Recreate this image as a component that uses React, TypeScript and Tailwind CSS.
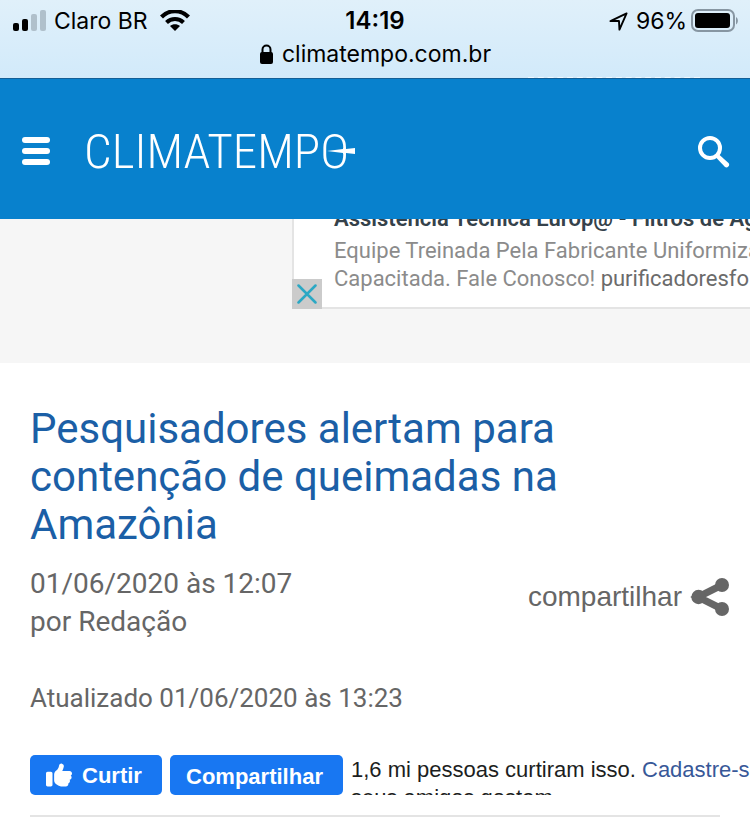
import { FaThumbsUp } from 'react-icons/fa6';

function StatusBar() {
  return (
    <div className="relative h-[79px] overflow-hidden border-b border-[#145f96] bg-gradient-to-b from-[#e0f0fa] to-[#d2eafa] font-['Inter',sans-serif] text-black">
      <div className="grid h-[42px] grid-cols-3 items-center px-3 text-[23px] leading-7">
        <div className="flex items-center gap-2">
          <svg width="34" height="22" viewBox="0 0 34 22" aria-hidden="true">
            <rect x="1" y="13" width="6" height="8" rx="2" />
            <rect x="10" y="9" width="6" height="12" rx="2" />
            <rect x="19" y="4" width="6" height="17" rx="2" fill="#b0c0cb" />
            <rect x="28" y="0" width="6" height="21" rx="2" fill="#b0c0cb" />
          </svg>
          <span className="whitespace-nowrap">Claro BR</span>
          <svg className="ml-1" width="30" height="22" viewBox="0 0 30 22" aria-hidden="true">
            <path d="M1.500 7C9 -.7 21 -.7 28.500 7" fill="none" stroke="#000" strokeWidth="4.200" />
            <path d="M6.500 12.500c4.700-4.700 12.300-4.700 17 0" fill="none" stroke="#000" strokeWidth="4" />
            <path d="M15 21l-5-5c2.800-2.500 7.200-2.500 10 0z" />
          </svg>
        </div>
        <span className="text-center text-[24px] font-semibold">14:19</span>
        <div className="flex items-center justify-end gap-1">
          <svg className="mr-1" width="19" height="19" viewBox="0 0 20 20" fill="none" stroke="#000" strokeWidth="2" strokeLinejoin="round" aria-hidden="true">
            <path d="M18.500 1.500L1.500 9.500h9l0.500 9z" />
          </svg>
          <span>96%</span>
          <svg width="47" height="24" viewBox="0 0 47 24" aria-hidden="true">
            <rect x="1" y="1" width="42" height="21" rx="6" fill="none" stroke="#8796a2" strokeWidth="2" />
            <rect x="4" y="4" width="35" height="15" rx="3" />
            <path d="M45 8c2.500 1.500 2.500 6 0 7.500z" fill="#8796a2" />
          </svg>
        </div>
      </div>
      <div className="flex items-center justify-center gap-2 text-[23px] leading-6">
        <svg width="15" height="20" viewBox="0 0 15 20" aria-hidden="true">
          <path d="M3.500 9V5.500a4 4 0 0 1 8 0V9" fill="none" stroke="#000" strokeWidth="2" />
          <rect x="1" y="8" width="13" height="12" rx="2" />
        </svg>
        <span>climatempo.com.br</span>
      </div>
      {/* page content scrolled behind the bar */}
      <div className="absolute right-[50px] -bottom-px w-[172px] border-b-2 border-dashed border-white/70" />
    </div>
  );
}

function Header() {
  return (
    <header className="flex h-[140px] items-center justify-between bg-[#0881cd] px-5 pt-1 text-white">
      <div className="flex items-center gap-8">
        <button type="button" aria-label="Menu" className="flex w-8 flex-col gap-[5px] px-[2px]">
          <span className="h-1.5 rounded-full bg-white" />
          <span className="h-1.5 rounded-full bg-white" />
          <span className="h-1.5 rounded-full bg-white" />
        </button>
        <a href="#" className="flex items-center font-['Roboto_Condensed',sans-serif] text-[49px] leading-none font-light">
          CLIMATEMPO
          <svg className="-ml-[22px]" width="28" height="8" viewBox="0 0 28 8" fill="#fff" aria-hidden="true">
            <path d="M0 4l16-2V1l3 1 9-1v6l-9-1-3 1V6z" />
          </svg>
        </a>
      </div>
      <button type="button" aria-label="Buscar">
        <svg width="34" height="34" viewBox="0 0 34 34" aria-hidden="true">
          <circle cx="14" cy="14" r="10" fill="none" stroke="#fff" strokeWidth="4" />
          <path d="M20 23.500l3-3 9.500 8.500c2 2.500-1 5.500-3.500 4z" fill="#fff" />
        </svg>
      </button>
    </header>
  );
}

function AdBanner() {
  return (
    <section className="h-36 overflow-hidden bg-[#f6f6f6]">
      <div className="relative ml-[292px] flex h-[90px] flex-col justify-end border-b-2 border-l-2 border-[#e4e4e4] bg-white pb-3.5 pl-10 font-['Roboto',sans-serif] text-[22px] leading-7 whitespace-nowrap text-[#8b8b8b]">
        <p className="mb-1 font-semibold text-[#35424b]">Assistência Técnica Europ@ - Filtros de Água</p>
        <p>Equipe Treinada Pela Fabricante Uniformizada e</p>
        <p>
          Capacitada. Fale Conosco! <span className="text-[#6b6b6b]">purificadoresfo</span>
        </p>
        <button type="button" aria-label="Fechar" className="absolute -bottom-0.5 -left-0.5 flex size-[30px] items-center justify-center bg-[#cbcbcb]">
          <svg width="20" height="20" viewBox="0 0 20 20" stroke="#2ba8c4" strokeWidth="2.500" strokeLinecap="round" aria-hidden="true">
            <path d="M1.500 1.500l17 17M18.500 1.500l-17 17" />
          </svg>
        </button>
      </div>
    </section>
  );
}

function LikeBar() {
  return (
    <div className="-mr-[30px] flex h-10 gap-2 overflow-hidden font-['Liberation_Sans',Arial,sans-serif] text-[22px]">
      <button type="button" className="flex w-[132px] shrink-0 items-center justify-center gap-2.5 rounded-[5px] bg-[#1877f2] pr-1 font-bold text-white">
        <FaThumbsUp className="size-[26px]" />
        Curtir
      </button>
      <button type="button" className="w-[173px] shrink-0 rounded-[5px] bg-[#1877f2] pt-0.5 pr-1 font-bold text-white">
        Compartilhar
      </button>
      <p className="pt-px leading-7 whitespace-nowrap text-[#1c1e21]">
        1,6 mi pessoas curtiram isso.{' '}
        <a href="#" className="text-[#385898]">Cadastre-se</a>
        <br />
        seus amigos gostam.
      </p>
    </div>
  );
}

export default function App() {
  return (
    <div className="w-full overflow-hidden bg-white">
      <StatusBar />
      <Header />
      <AdBanner />
      <main className="px-[30px] pt-[42px] font-['Roboto',sans-serif] text-[28px] text-[#666]">
        <h1 className="max-w-[600px] text-[42px] leading-[48px] text-[#1b5fa6]">
          Pesquisadores alertam para contenção de queimadas na Amazônia
        </h1>
        <div className="-mr-[10px] mt-4 flex items-start justify-between leading-[38px]">
          <p>
            01/06/2020 às 12:07
            <br />
            por Redação
          </p>
          <a href="#" className="mt-3 flex items-center gap-2 font-['Liberation_Sans',Arial,sans-serif]">
            compartilhar
            <svg width="40" height="40" viewBox="0 0 40 40" fill="#666" aria-hidden="true">
              <path d="M32 8L8 20l24 12" fill="none" stroke="#666" strokeWidth="7" />
              <circle cx="8.500" cy="20" r="7.200" />
              <circle cx="32" cy="8" r="7" />
              <circle cx="32" cy="32" r="7" />
            </svg>
          </a>
        </div>
        <p className="mt-[38px] mb-[38px] text-[26px] leading-[38px]">Atualizado 01/06/2020 às 13:23</p>
        <LikeBar />
        <hr className="mt-5 border-t-2 border-[#e4e4e4]" />
      </main>
    </div>
  );
}
